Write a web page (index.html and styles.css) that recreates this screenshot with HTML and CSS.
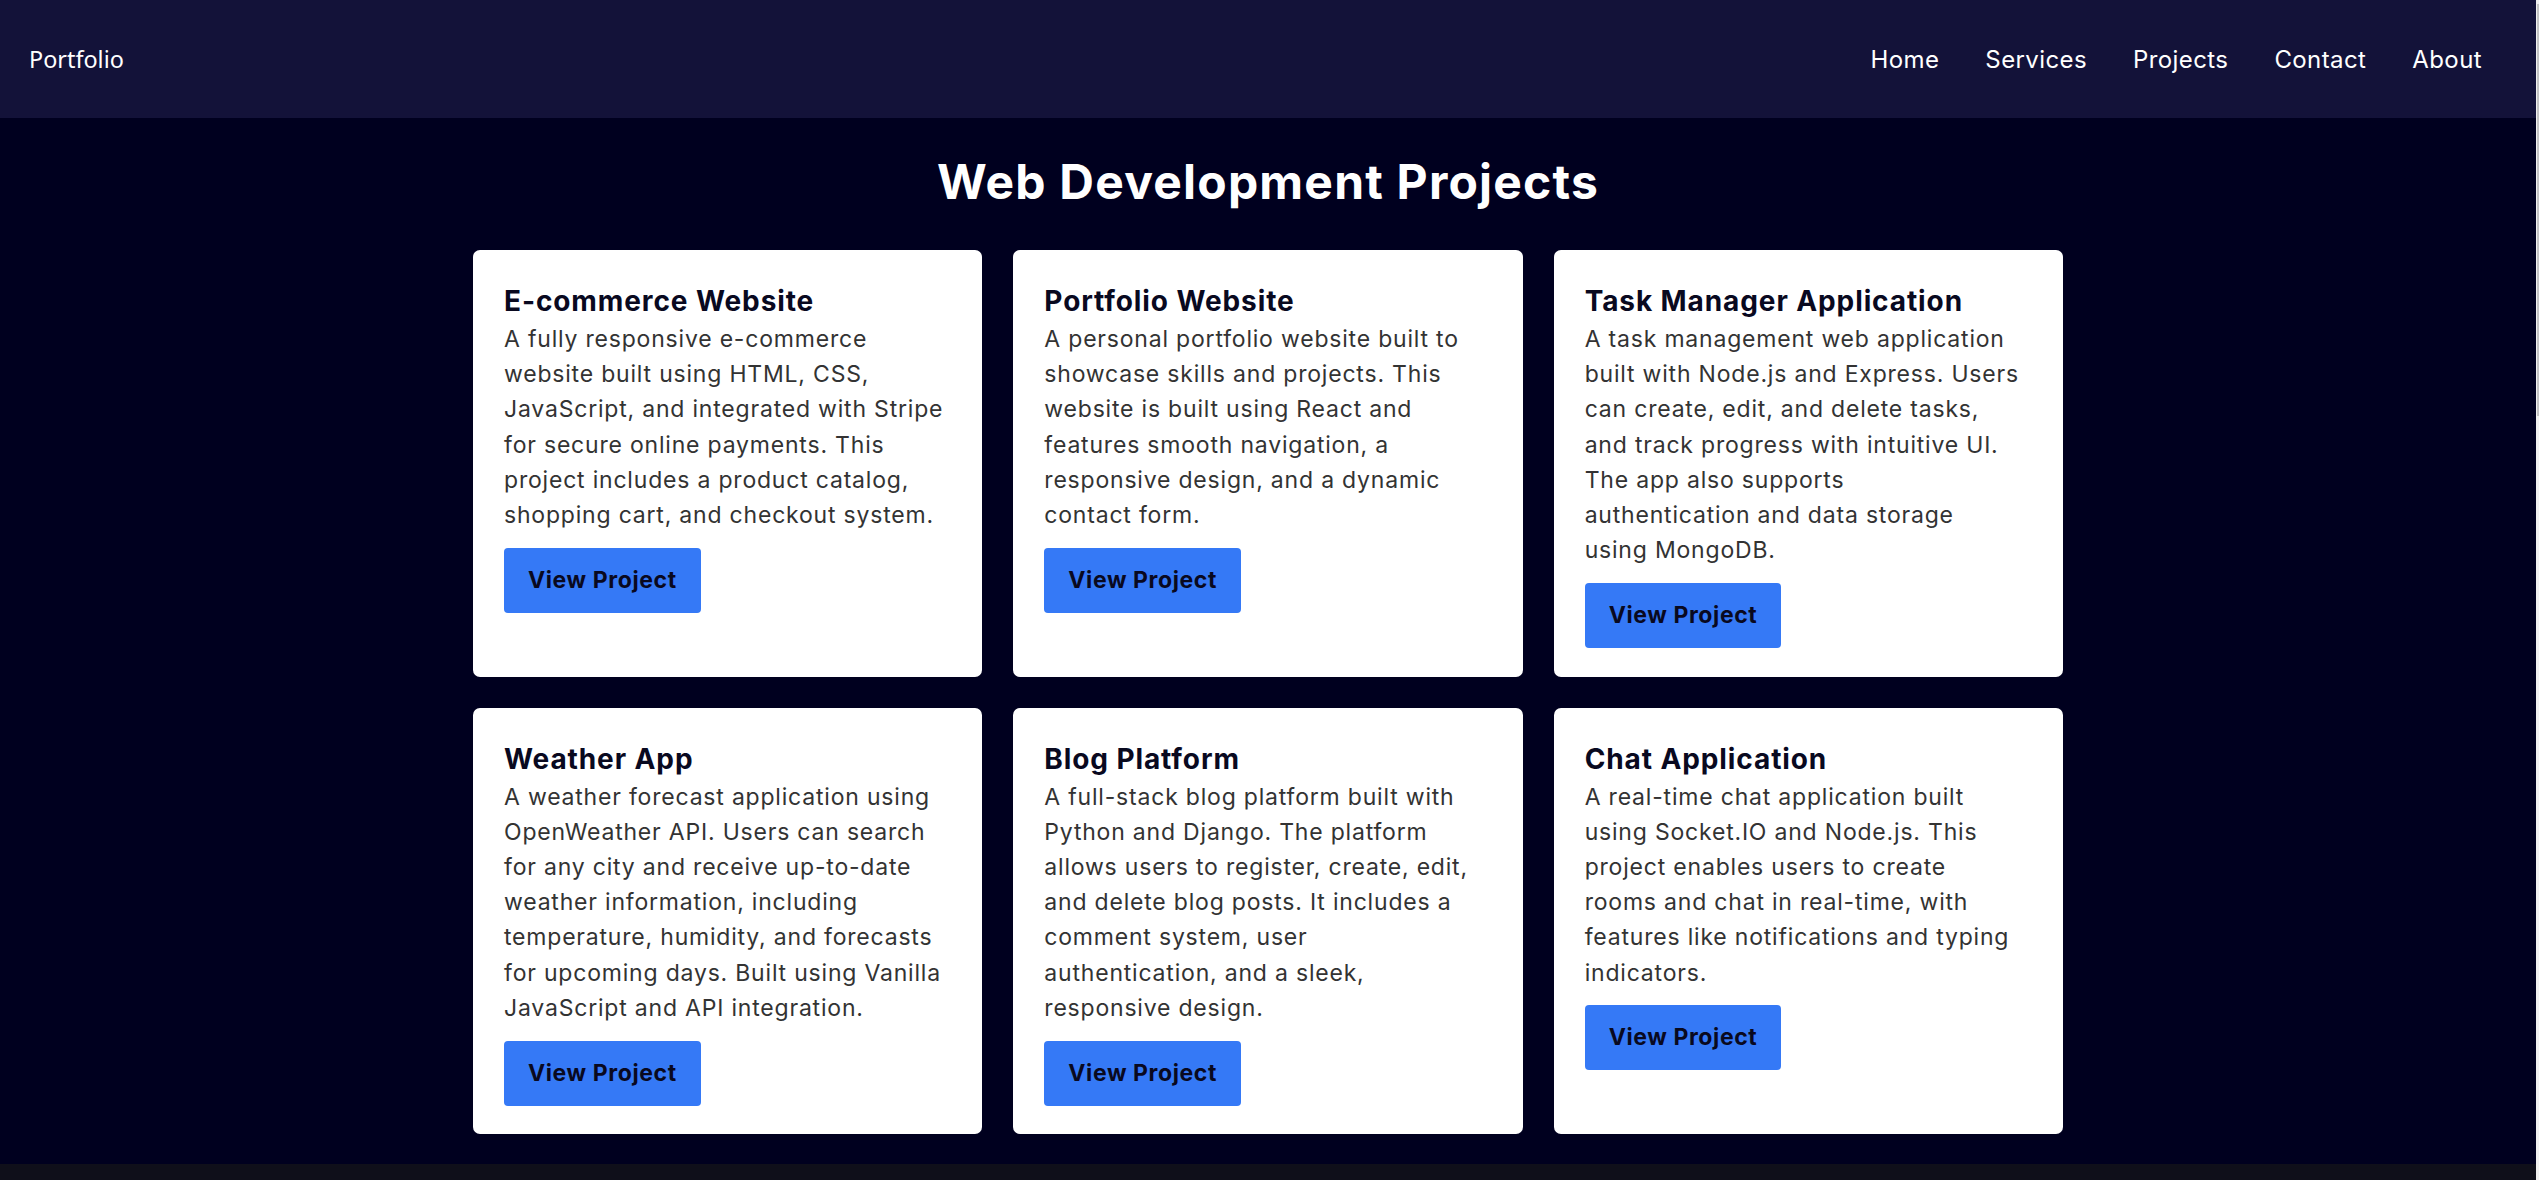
FILE: index.html
```html
<!DOCTYPE html>
<html lang="en">
<head>
<meta charset="utf-8">
<title>Web Development Projects</title>
<link rel="stylesheet" href="styles.css">
</head>
<body>
<header class="site-header">
  <a class="logo" href="#">Portfolio</a>
  <nav class="nav">
    <a href="#">Home</a>
    <a href="#">Services</a>
    <a href="#">Projects</a>
    <a href="#">Contact</a>
    <a href="#">About</a>
  </nav>
</header>
<main class="projects">
  <h2 class="projects-title">Web Development Projects</h2>
  <div class="grid">
    <article class="card">
      <h3 class="card-title">E-commerce Website</h3>
      <p class="card-text">A fully responsive e-commerce<br>website built using HTML, CSS,<br>JavaScript, and integrated with Stripe<br>for secure online payments. This<br>project includes a product catalog,<br>shopping cart, and checkout system.</p>
      <a class="btn" href="#">View Project</a>
    </article>
    <article class="card">
      <h3 class="card-title">Portfolio Website</h3>
      <p class="card-text">A personal portfolio website built to<br>showcase skills and projects. This<br>website is built using React and<br>features smooth navigation, a<br>responsive design, and a dynamic<br>contact form.</p>
      <a class="btn" href="#">View Project</a>
    </article>
    <article class="card">
      <h3 class="card-title">Task Manager Application</h3>
      <p class="card-text">A task management web application<br>built with Node.js and Express. Users<br>can create, edit, and delete tasks,<br>and track progress with intuitive UI.<br>The app also supports<br>authentication and data storage<br>using MongoDB.</p>
      <a class="btn" href="#">View Project</a>
    </article>
    <article class="card">
      <h3 class="card-title">Weather App</h3>
      <p class="card-text">A weather forecast application using<br>OpenWeather API. Users can search<br>for any city and receive up-to-date<br>weather information, including<br>temperature, humidity, and forecasts<br>for upcoming days. Built using Vanilla<br>JavaScript and API integration.</p>
      <a class="btn" href="#">View Project</a>
    </article>
    <article class="card">
      <h3 class="card-title">Blog Platform</h3>
      <p class="card-text">A full-stack blog platform built with<br>Python and Django. The platform<br>allows users to register, create, edit,<br>and delete blog posts. It includes a<br>comment system, user<br>authentication, and a sleek,<br>responsive design.</p>
      <a class="btn" href="#">View Project</a>
    </article>
    <article class="card">
      <h3 class="card-title">Chat Application</h3>
      <p class="card-text">A real-time chat application built<br>using Socket.IO and Node.js. This<br>project enables users to create<br>rooms and chat in real-time, with<br>features like notifications and typing<br>indicators.</p>
      <a class="btn" href="#">View Project</a>
    </article>
  </div>
</main>
<footer class="site-footer"></footer>
</body>
</html>
```
FILE: styles.css
```css
html {
  background-color: #f1f1f1;
  background-image: linear-gradient(#c4c4c4, #c4c4c4);
  background-repeat: no-repeat;
  background-position: right 0 top 4px;
  background-size: 2px 412px;
}
body {
  margin: 0 3px 0 0;
  font-family: "Inter", "Noto Sans", sans-serif;
  background: #00001f;
}
.site-header {
  height: 118px;
  background: #131239;
  display: flex;
  align-items: center;
  justify-content: space-between;
  padding: 0 54px 0 29px;
}
.logo {
  font-family: "Noto Sans", "Open Sans", sans-serif;
  font-size: 23.4px;
  color: #ffffff;
  text-decoration: none;
}
.nav {
  display: flex;
  gap: 46px;
}
.nav a {
  color: #ffffff;
  text-decoration: none;
  font-size: 24px;
  letter-spacing: 0.4px;
}
.projects {
  background: #00001f;
  padding: 34px 0 30px;
}
.projects-title {
  margin: 0 0 38px;
  text-align: center;
  color: #ffffff;
  font-size: 48px;
  line-height: 60px;
  font-weight: 700;
  letter-spacing: 1.2px;
}
.grid {
  width: 1590px;
  margin: 0 auto;
  display: grid;
  grid-template-columns: repeat(3, 1fr);
  gap: 31px;
}
.card {
  background: #ffffff;
  border-radius: 7px;
  padding: 30px 30px 28.5px 31px;
  display: flex;
  flex-direction: column;
  align-items: flex-start;
}
.card-title {
  margin: 0;
  font-size: 28px;
  line-height: 42px;
  font-weight: 700;
  letter-spacing: 0.9px;
  color: #09091f;
}
.card-text {
  margin: 0 0 14.6px;
  font-size: 23px;
  line-height: 35.2px;
  letter-spacing: 0.8px;
  color: #333333;
  white-space: nowrap;
}
.btn {
  display: inline-block;
  background: #3579f6;
  color: #09091f;
  text-decoration: none;
  font-size: 23px;
  font-weight: 700;
  letter-spacing: 0.6px;
  line-height: 35px;
  padding: 15px 24px;
  border-radius: 4px;
}
.site-footer {
  background: #0f0f1a;
  height: 16px;
}
```
